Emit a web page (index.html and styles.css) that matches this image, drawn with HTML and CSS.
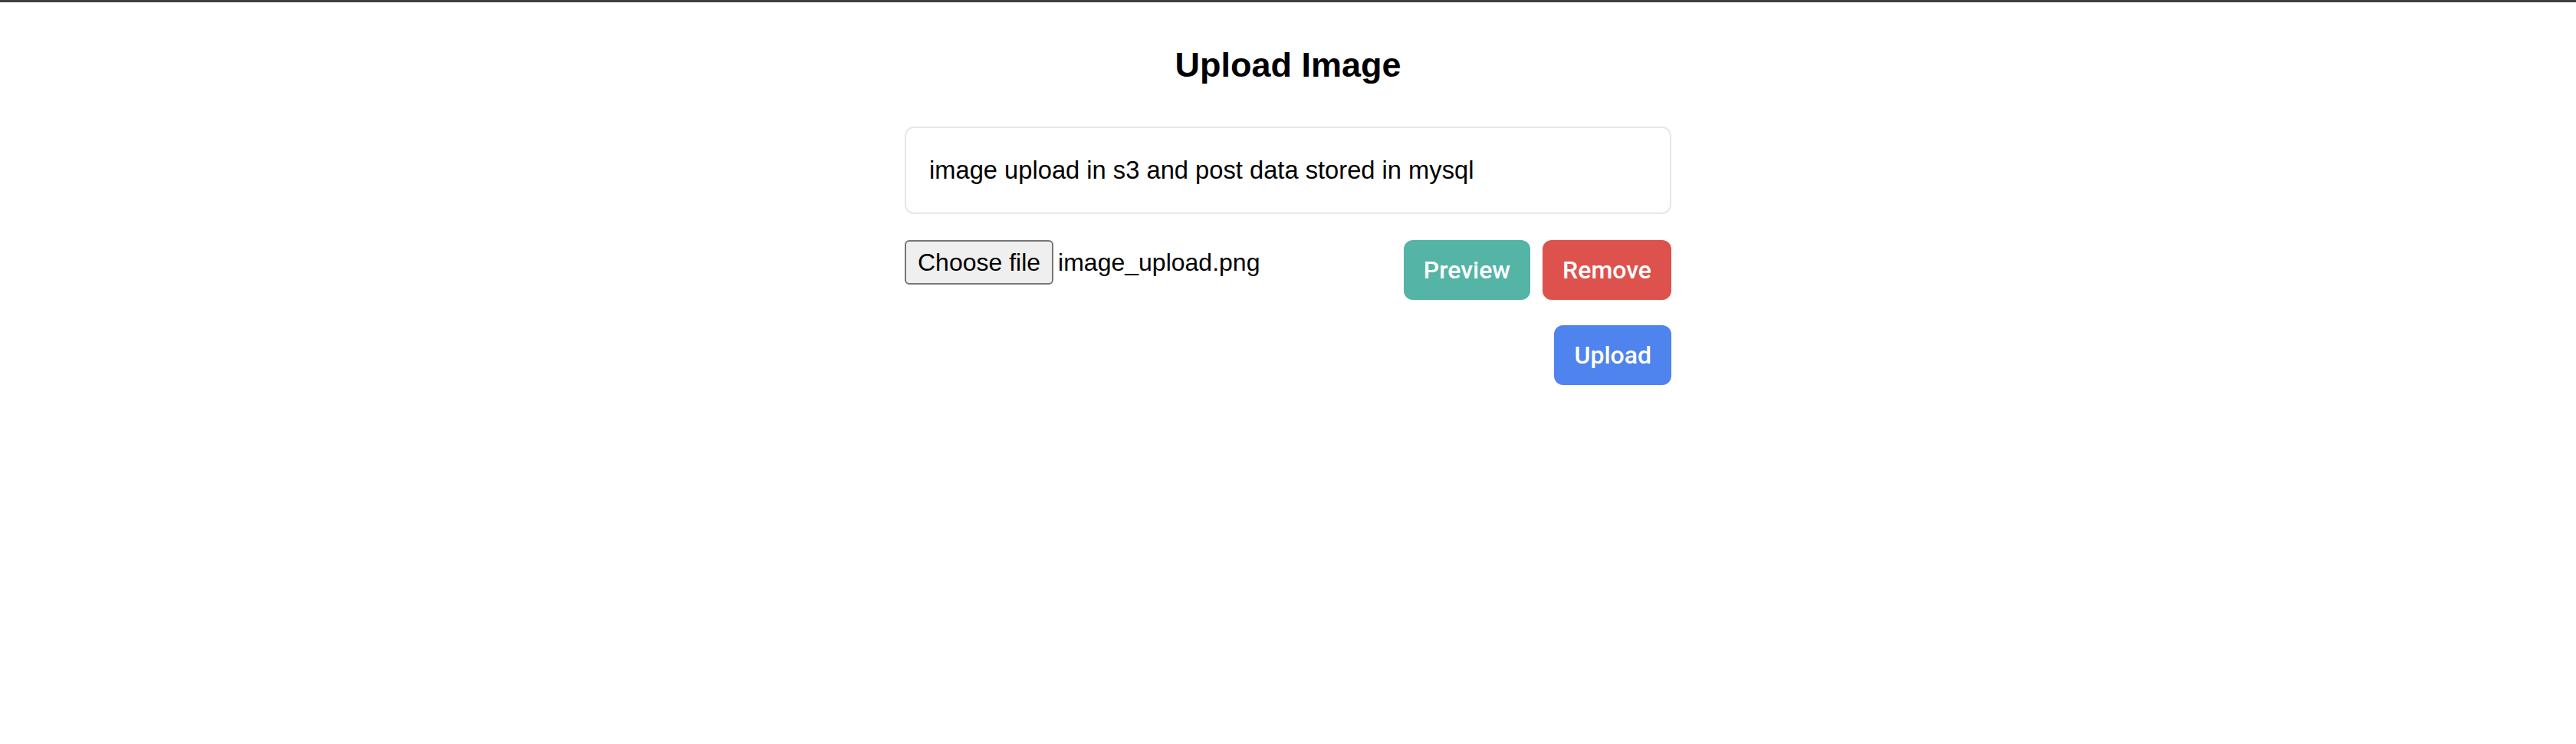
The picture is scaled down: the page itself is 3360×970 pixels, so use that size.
FILE: index.html
```html
<!DOCTYPE html>
<html lang="en">
<head>
<meta charset="utf-8">
<title>Upload Image</title>
<link rel="stylesheet" href="styles.css">
</head>
<body>
<div class="topbar"></div>
<main class="container">
  <h1 class="title">Upload Image</h1>
  <div class="card">image upload in s3 and post data stored in mysql</div>
  <div class="row">
    <div class="file">
      <span class="file-btn">Choose file</span>
      <span class="file-name">image_upload.png</span>
    </div>
    <div class="actions">
      <button class="btn btn-preview">Preview</button>
      <button class="btn btn-remove">Remove</button>
    </div>
  </div>
  <div class="row row-end">
    <button class="btn btn-upload">Upload</button>
  </div>
</main>
</body>
</html>
```

FILE: styles.css
```css
* { box-sizing: border-box; }
html, body { margin: 0; padding: 0; background: #fff; }
body {
  font-family: "Liberation Sans", Arial, sans-serif;
  color: #000;
}
.topbar {
  height: 3px;
  background: #3f3f3f;
}
.container {
  width: 1000px;
  margin: 0 auto;
}
.title {
  margin: 55px 0 54px;
  text-align: center;
  font-size: 45px;
  line-height: 53px;
  font-weight: 700;
}
.card {
  border: 2px solid #e6e7ea;
  border-radius: 12px;
  padding: 31px 30px;
  font-size: 32.7px;
  line-height: 48px;
}
.row {
  display: flex;
  justify-content: space-between;
  align-items: flex-start;
  margin-top: 34px;
}
.row-end { justify-content: flex-end; margin-top: 33px; }
.file {
  display: flex;
  align-items: center;
  gap: 6px;
  font-size: 32px;
}
.file-btn {
  display: inline-flex;
  align-items: center;
  height: 58px;
  padding: 0 15px;
  background: #efefef;
  border: 2px solid #767676;
  border-radius: 6px;
  line-height: 1;
}
.actions {
  display: flex;
  gap: 16px;
}
.btn {
  border: none;
  border-radius: 12px;
  padding: 15px 26px;
  font-family: Roboto, "Liberation Sans", Arial, sans-serif;
  font-weight: 500;
  font-size: 32px;
  line-height: 48px;
  color: #fff;
  cursor: pointer;
}
.btn-preview { background: #54b4a6; }
.btn-remove { background: #de524d; }
.btn-upload { background: #4f83ee; }
```
